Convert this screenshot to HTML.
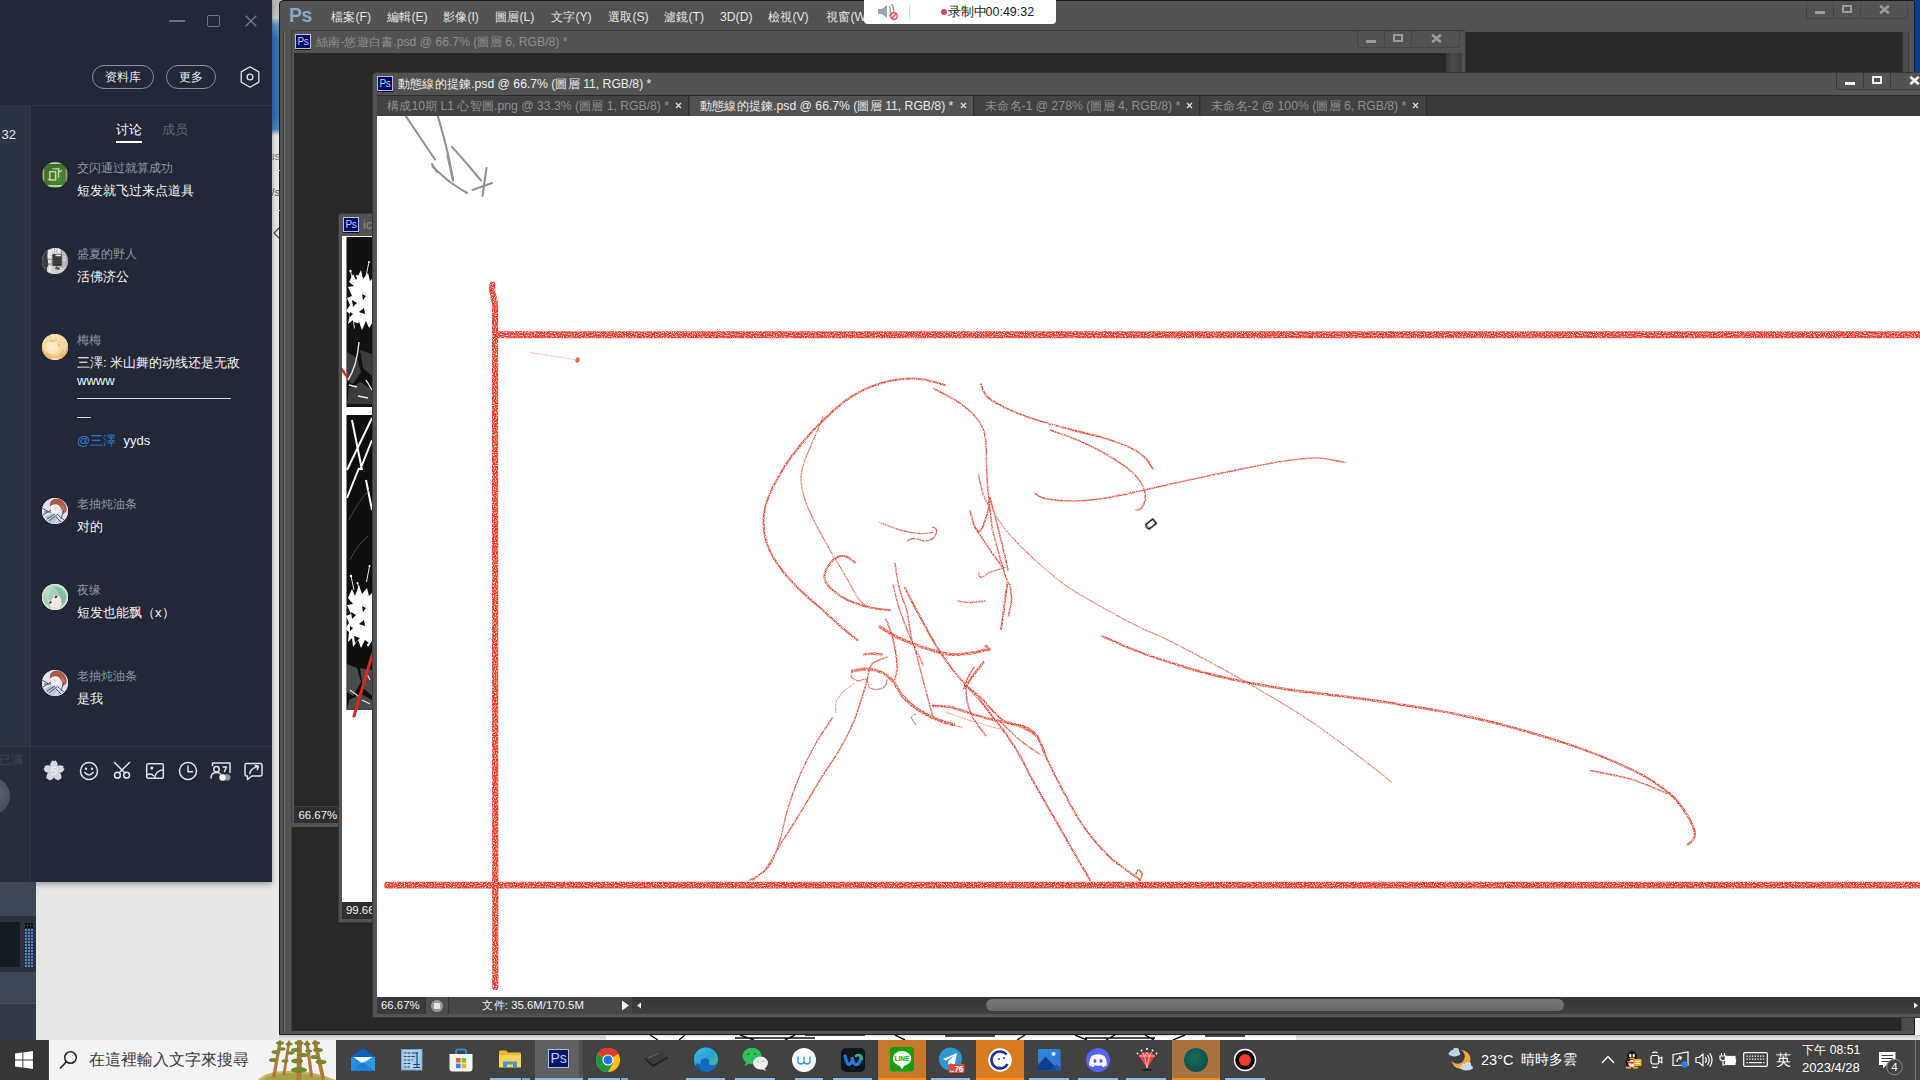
<!DOCTYPE html>
<html lang="zh">
<head>
<meta charset="utf-8">
<title>screen</title>
<style>
*{box-sizing:border-box;margin:0;padding:0}
html,body{width:1920px;height:1080px;overflow:hidden;background:#e6e6e6;font-family:"Liberation Sans",sans-serif;}
.abs{position:absolute}
#desk{position:absolute;left:0;top:0;width:1920px;height:1080px;overflow:hidden;background:#e6e6e6}
/* ---------- desktop remnants ---------- */
#gapstrip{left:272px;top:0;width:8px;height:1040px;background:linear-gradient(#b9b5b0 0,#c9c6c2 16px,#e9e9e9 20px,#e9e9e9 100%)}
#gapblue{left:272px;top:17px;width:8px;height:118px;background:linear-gradient(#d0d8e2 0,#5c8fc4 8px,#2f74b8 22px,#2f74b8 100px,#4a86c0 112px,#e0e4e8 118px)}
/* ---------- left chat panel ---------- */
#chat{left:0;top:0;width:272px;height:882px;background:#222838;color:#fff;box-shadow:0 2px 6px rgba(0,0,0,.35)}
#chat .col{left:0;top:105px;width:31px;height:777px;background:#2c3342;border-right:1px solid #323a4a}
#chat .hline{left:0;top:105px;width:272px;height:1px;background:#2d3444}
#chat .hline2{left:31px;top:746px;width:241px;height:1px;background:#2f3646}
.pill{position:absolute;height:24px;border:1px solid #8a90a0;border-radius:12px;color:#e8eaf0;font-size:12px;line-height:22px;text-align:center}
.name{position:absolute;left:77px;font-size:12px;color:#8e95a5;white-space:nowrap;line-height:14px}
.msg{position:absolute;left:77px;font-size:13px;color:#f2f3f6;white-space:nowrap;line-height:18px}
.av{position:absolute;left:42px;width:26px;height:26px;border-radius:50%;overflow:hidden}
/* ---------- below chat ---------- */
#lowleft{left:0;top:882px;width:36px;height:158px;background:#3f4756}
/* ---------- photoshop ---------- */
#ps{left:279px;top:0;width:1636px;height:1035px;background:#535353;border:1px solid #1c1c1c;border-radius:4px 0 0 0}
.pstxt{position:absolute;color:#e4e4e4;font-size:12.200px;white-space:nowrap}
.psico{position:absolute;width:16px;height:15px;box-shadow:0 1px 0 #111;background:#000a66;border:1px solid #b8bce6;color:#c6ccff;font-size:10px;line-height:13px;text-align:center;letter-spacing:-.3px}
.wbtn{position:absolute;height:17px;background:#535353;border:1px solid #444;border-top:none;border-radius:0 0 3px 3px}
/* ---------- taskbar ---------- */
#tb{left:0;top:1040px;width:1920px;height:40px;background:#424242}
#search{left:49px;top:1040px;width:287px;height:40px;background:#f3f3f3}
.tbi{position:absolute;top:1040px;width:48px;height:40px}
.tbi .ul{position:absolute;left:4px;right:4px;bottom:0;height:2px;background:#8fb8e0}
.tray{position:absolute;color:#fff;font-size:12px;white-space:nowrap}
.cj{display:inline-block;text-align:justify;text-align-last:justify;text-justify:inter-character;white-space:nowrap;vertical-align:baseline}
</style>
</head>
<body>
<div id="desk">

<!-- desktop gap -->
<div id="gapstrip" class="abs"></div>
<div id="gapblue" class="abs"></div>

<!-- PHOTOSHOP -->
<div id="ps" class="abs"></div>

<!-- right-of-PS desktop bits -->
<div class="abs" style="left:1915px;top:0;width:5px;height:72px;background:#0b3d97"></div>
<div class="abs" style="left:1915px;top:1017px;width:5px;height:23px;background:#f4f4f4"></div>
<!-- strip between PS bottom and taskbar -->
<div class="abs" style="left:279px;top:1035px;width:1641px;height:5px;background:linear-gradient(#c4c4c4,#dedede 60%,#e6e6e6)"></div>
<div class="abs" style="left:606px;top:1035px;width:690px;height:5px;background:linear-gradient(#d8d8d8,#fff 40%)"></div>
<svg class="abs" style="left:645px;top:1035px" width="615" height="5" viewBox="0 0 615 5"><path d="M5 0l8 5M40 0l-6 5M95 0l14 5M150 0l-10 5M160 0h60M250 0l10 5M300 1h50M380 0l-8 5M430 0l12 5M470 0l-9 5M500 0l9 5M540 0l-12 5M560 1h40M90 3h80M440 3h70" stroke="#111" stroke-width="1.4" fill="none"/></svg>

<!-- main PS dark workspace -->
<div class="abs" style="left:292px;top:32px;width:1610px;height:999px;background:#282828"></div>
<!-- frame lines -->
<div class="abs" style="left:283px;top:32px;width:1px;height:999px;background:#3a3a3a"></div><div class="abs" style="left:284px;top:32px;width:1px;height:999px;background:#727272"></div>
<div class="abs" style="left:291px;top:30px;width:1px;height:1001px;background:#404040"></div>
<div class="abs" style="left:1902px;top:32px;width:7px;height:40px;background:#4a4a4a;border-left:1px solid #3a3a3a;border-right:1px solid #3a3a3a"></div>
<div class="abs" style="left:1901px;top:1017px;width:13px;height:14px;background:#4c4c4c;border-left:1px solid #3a3a3a"></div>

<!-- PS menu bar -->
<div class="abs" style="left:289px;top:2px;font-size:19.500px;font-weight:bold;color:#86a6ca;letter-spacing:-.6px;line-height:26px">Ps</div>
<div class="pstxt" style="left:331px;top:10px;line-height:14px"><span class="cj" style="width:2em">檔案</span>(F)</div>
<div class="pstxt" style="left:387px;top:10px;line-height:14px"><span class="cj" style="width:2em">編輯</span>(E)</div>
<div class="pstxt" style="left:443px;top:10px;line-height:14px"><span class="cj" style="width:2em">影像</span>(I)</div>
<div class="pstxt" style="left:495px;top:10px;line-height:14px"><span class="cj" style="width:2em">圖層</span>(L)</div>
<div class="pstxt" style="left:551px;top:10px;line-height:14px"><span class="cj" style="width:2em">文字</span>(Y)</div>
<div class="pstxt" style="left:608px;top:10px;line-height:14px"><span class="cj" style="width:2em">選取</span>(S)</div>
<div class="pstxt" style="left:664px;top:10px;line-height:14px"><span class="cj" style="width:2em">濾鏡</span>(T)</div>
<div class="pstxt" style="left:720px;top:10px;line-height:14px">3D(D)</div>
<div class="pstxt" style="left:768px;top:10px;line-height:14px"><span class="cj" style="width:2em">檢視</span>(V)</div>
<div class="pstxt" style="left:826px;top:10px;line-height:14px"><span class="cj" style="width:2em">視窗</span>(W</div>
<!-- PS window buttons -->
<div class="wbtn" style="left:1806px;top:2px;width:102px"></div>
<div class="abs" style="left:1833px;top:2px;width:1px;height:17px;background:#444"></div>
<div class="abs" style="left:1860px;top:2px;width:1px;height:17px;background:#444"></div>
<div class="abs" style="left:1815px;top:11px;width:10px;height:3px;background:#9a9a9a"></div>
<div class="abs" style="left:1842px;top:5px;width:10px;height:8px;border:2px solid #9a9a9a"></div>
<svg class="abs" style="left:1879px;top:5px" width="11" height="9" viewBox="0 0 11 9"><path d="M1.200 0.800l8.600 7.400M9.800 0.800l-8.600 7.400" stroke="#9a9a9a" stroke-width="2.700"/></svg>

<!-- recording widget -->
<div class="abs" style="left:864px;top:0;width:192px;height:24px;background:#fff;border-radius:0 0 4px 4px"></div>
<svg class="abs" style="left:876px;top:3px" width="26" height="18" viewBox="0 0 26 18"><path d="M2 6h4l5-4v13l-5-4H2z" fill="#98a2ae"/><path d="M13 3c2 1.5 2 8.500 0 10M15.500 1c3 3 3 11 0 14" stroke="#9aa0a8" stroke-width="1.3" fill="none"/><circle cx="18" cy="13" r="3.200" fill="#fff" stroke="#e25555" stroke-width="1.400"/><path d="M15.800 15.200l4.400-4.400" stroke="#e25555" stroke-width="1.400"/></svg>
<div class="abs" style="left:909px;top:4px;width:1px;height:15px;background:#dcdcdc"></div>
<div class="abs" style="left:941px;top:9px;width:6px;height:6px;border-radius:3px;background:#e3456a"></div>
<div class="abs" style="left:948px;top:4px;font-size:12.5px;line-height:16px;color:#222;white-space:nowrap"><span class="cj" style="width:3em">录制中</span>00:49:32</div>

<!-- DOC WINDOW 1 -->
<div class="abs" style="left:291px;top:30px;width:1175px;height:797px;background:#535353;border:1px solid #3a3a3a;border-radius:4px 4px 0 0"></div>
<div class="abs" style="left:294px;top:53px;width:1152px;height:753px;background:#282828"></div>
<div class="abs" style="left:1446px;top:53px;width:16px;height:753px;background:linear-gradient(90deg,#3a3a3a,#4a4a4a 40%,#3e3e3e)"></div>
<div class="psico" style="left:295px;top:34px">Ps</div>
<div class="pstxt" style="left:316px;top:35px;line-height:14px;color:#8d8d8d"><span class="cj" style="width:2em">絲南</span>-<span class="cj" style="width:4em">悠遊白書</span>.psd @ 66.7% (<span class="cj" style="width:2em">圖層</span> 6, RGB/8) *</div>
<div class="wbtn" style="left:1357px;top:31px;width:103px;border-color:#464646"></div>
<div class="abs" style="left:1384px;top:31px;width:1px;height:17px;background:#464646"></div>
<div class="abs" style="left:1411px;top:31px;width:1px;height:17px;background:#464646"></div>
<div class="abs" style="left:1366px;top:40px;width:10px;height:3px;background:#9a9a9a"></div>
<div class="abs" style="left:1393px;top:34px;width:10px;height:8px;border:2px solid #9a9a9a"></div>
<svg class="abs" style="left:1431px;top:34px" width="11" height="9" viewBox="0 0 11 9"><path d="M1.200 0.800l8.600 7.400M9.800 0.800l-8.600 7.400" stroke="#9a9a9a" stroke-width="2.700"/></svg>
<!-- doc1 status -->
<div class="abs" style="left:294px;top:806px;width:1168px;height:18px;background:#3e3e3e"></div><div class="abs" style="left:291px;top:823px;width:50px;height:4px;background:#535353"></div>
<div class="abs" style="left:294px;top:807px;width:44px;height:16px;background:#2f2f2f;color:#f0f0f0;font-size:11.400px;line-height:16px;padding-left:4.500px">66.67%</div>

<!-- DOC WINDOW 3 (mini) -->
<div class="abs" style="left:338px;top:213px;width:60px;height:710px;background:#535353;border:1px solid #3a3a3a;border-radius:4px 0 0 0"></div>
<div class="psico" style="left:343px;top:217px">Ps</div>
<div class="pstxt" style="left:363px;top:218px;line-height:14px;color:#8d8d8d">ic</div>
<div class="abs" style="left:342px;top:236px;width:40px;height:666px;background:#fff"></div>
<svg class="abs" style="left:342px;top:236px" width="31" height="485" viewBox="342 236 31 485">
<rect x="346.500" y="237" width="26" height="170" fill="#111"/>
<rect x="346.500" y="415" width="26" height="295" fill="#0e0e0e"/>
<!-- panel 1 flower -->
<g fill="#fff">
<path d="M349 282l4-8 3 6 5-10 2 9 5-6 2 8 3-3v44l-4 6-3-7-4 9-3-8-5 7-1-9-5 4 2-10-4-3 4-6-3-7 5-2-4-9 6-1z"/>
<circle cx="350.500" cy="271" r="1.200"/><circle cx="369" cy="262" r="1"/><circle cx="357" cy="276" r="1"/>
</g>
<g stroke="#fff" stroke-width=".9" fill="none"><path d="M350.500 271l3 12M369 262l-3 14M357 276l2 8"/></g>
<g fill="#111"><path d="M352 300l5 3-4 4zM359 312l5-4 1 6zM354 322l6 2-5 5zM362 294l4 2-3 4zM365 325l4 3-5 3zM350 312l3 2-3 3z"/></g>
<g fill="#3c3c3c"><path d="M347 352l10 6 4 14-8 12-6-4zM360 350l12 4v22l-9-8zM349 388l12-6 11 8v14h-25z"/></g>
<g stroke="#e8e8e8" stroke-width="1.400" fill="none"><path d="M359 342q-2 24-11 38M366 380l6 10M349 385l8 2M358 396l10 2"/></g>
<path d="M341 366l6.500 9.500v4l-6.500-9z" fill="#d8281c"/>
<!-- panel 2 -->
<g stroke="#fff" stroke-width="2" fill="none"><path d="M347 470l25-52M352 420l10 50M372 440l-12 30M347 498l12-30M366 480l6 30"/></g>
<g stroke="#555" stroke-width=".8" fill="none"><path d="M349 520q10-20 20-30M350 560q8-16 18-24"/></g>
<g fill="#fff">
<path d="M348 598l4-9 3 7 4-11 3 9 5-6 2 8 3-3v48l-4 6-3-7-4 8-3-8-5 7-1-9-4 4 1-10-4-3 4-6-3-7 5-2-4-9 6-1z"/>
<circle cx="351" cy="576" r="1.200"/><circle cx="369.500" cy="566" r="1"/><circle cx="357.500" cy="583" r="1"/>
</g>
<g stroke="#fff" stroke-width=".9" fill="none"><path d="M351 576l3 14M369.500 566l-3 16M357.500 583l2 8"/></g>
<g fill="#0e0e0e"><path d="M351 612l5 3-4 4zM359 624l5-4 1 6zM354 636l6 2-5 5zM362 606l4 2-3 4zM365 640l4 3-5 3zM350 626l3 2-3 3z"/></g>
<g fill="#4a4a4a"><path d="M347 664l10 4 4 14-8 14-6-4zM360 668l12 2v26l-9-8zM349 700l12-6 11 6v10h-25z"/></g>
<g stroke="#e0e0e0" stroke-width="1.200" fill="none"><path d="M350 690l8 6M362 700l8 4M366 672l4 8"/></g>
<path d="M372.500 654L354 716" stroke="#d8281c" stroke-width="3" stroke-linecap="round"/>
</svg>
<div class="abs" style="left:342px;top:902px;width:40px;height:17px;background:#2f2f2f;color:#f0f0f0;font-size:11.400px;line-height:16px;padding-left:4px;white-space:nowrap;overflow:hidden">99.66</div>

<!-- DOC WINDOW 2 (active) -->
<div class="abs" style="left:372px;top:72px;width:1560px;height:946px;background:#535353;border:1px solid #383838;border-radius:4px 0 0 0"></div>
<div class="psico" style="left:377px;top:76px">Ps</div>
<div class="pstxt" style="left:398px;top:77px;line-height:14px;color:#ececec"><span class="cj" style="width:6em">動態線的提鍊</span>.psd @ 66.7% (<span class="cj" style="width:2em">圖層</span> 11, RGB/8) *</div>
<div class="wbtn" style="left:1836px;top:73px;width:100px;border-color:#3c3c3c"></div>
<div class="abs" style="left:1863px;top:73px;width:1px;height:17px;background:#3c3c3c"></div>
<div class="abs" style="left:1890px;top:73px;width:1px;height:17px;background:#3c3c3c"></div>
<div class="abs" style="left:1845px;top:82px;width:10px;height:3px;background:#f0f0f0"></div>
<div class="abs" style="left:1872px;top:76px;width:10px;height:8px;border:2px solid #f0f0f0"></div>
<svg class="abs" style="left:1909px;top:76px" width="11" height="9" viewBox="0 0 11 9"><path d="M1.200 0.800l8.600 7.400M9.800 0.800l-8.600 7.400" stroke="#f0f0f0" stroke-width="2.700"/></svg>
<!-- tab bar -->
<div class="abs" style="left:377px;top:95px;width:1543px;height:21px;background:#3a3a3a;border-top:1px solid #2c2c2c"></div>
<div class="abs" style="left:377px;top:96px;width:312px;height:20px;background:#424242;border-right:1px solid #2e2e2e"></div>
<div class="abs" style="left:690px;top:96px;width:284px;height:20px;background:#535353;border-right:1px solid #2e2e2e"></div>
<div class="abs" style="left:975px;top:96px;width:225px;height:20px;background:#424242;border-right:1px solid #2e2e2e"></div>
<div class="abs" style="left:1201px;top:96px;width:226px;height:20px;background:#424242;border-right:1px solid #2e2e2e"></div>
<div class="pstxt" style="left:387px;top:99px;line-height:14px;color:#8f8f8f"><span class="cj" style="width:2em">構成</span>10<span class="cj" style="width:1em">期</span> L1 <span class="cj" style="width:3em">心智圖</span>.png @ 33.3% (<span class="cj" style="width:2em">圖層</span> 1, RGB/8) *</div>
<div class="pstxt" style="left:700px;top:99px;line-height:14px;color:#e6e6e6"><span class="cj" style="width:6em">動態線的提鍊</span>.psd @ 66.7% (<span class="cj" style="width:2em">圖層</span> 11, RGB/8) *</div>
<div class="pstxt" style="left:985px;top:99px;line-height:14px;color:#8f8f8f"><span class="cj" style="width:3em">未命名</span>-1 @ 278% (<span class="cj" style="width:2em">圖層</span> 4, RGB/8) *</div>
<div class="pstxt" style="left:1211px;top:99px;line-height:14px;color:#8f8f8f"><span class="cj" style="width:3em">未命名</span>-2 @ 100% (<span class="cj" style="width:2em">圖層</span> 6, RGB/8) *</div>
<svg class="abs" style="left:675px;top:102px" width="7" height="7" viewBox="0 0 7 7"><path d="M1 1l5 5M6 1l-5 5" stroke="#dcdcdc" stroke-width="1.250"/></svg>
<svg class="abs" style="left:960px;top:102px" width="7" height="7" viewBox="0 0 7 7"><path d="M1 1l5 5M6 1l-5 5" stroke="#dcdcdc" stroke-width="1.250"/></svg>
<svg class="abs" style="left:1186px;top:102px" width="7" height="7" viewBox="0 0 7 7"><path d="M1 1l5 5M6 1l-5 5" stroke="#dcdcdc" stroke-width="1.250"/></svg>
<svg class="abs" style="left:1412px;top:102px" width="7" height="7" viewBox="0 0 7 7"><path d="M1 1l5 5M6 1l-5 5" stroke="#dcdcdc" stroke-width="1.250"/></svg>
<!-- canvas -->
<div class="abs" style="left:377px;top:116px;width:1543px;height:881px;background:#fff"></div>
<!--DRAW-START--><svg class="abs" style="left:377px;top:116px" width="1543" height="881" viewBox="377 116 1543 881">
<defs><filter id="rough" x="-2%" y="-20%" width="104%" height="140%"><feTurbulence type="fractalNoise" baseFrequency="0.9" numOctaves="1" seed="3" result="n"/><feColorMatrix in="n" type="matrix" values="0 0 0 0 0  0 0 0 0 0  0 0 0 0 0  0 0 0 -3 2.35" result="m"/><feComposite in="SourceGraphic" in2="m" operator="in" result="c"/><feGaussianBlur in="c" stdDeviation="0.55"/></filter><filter id="rough2" x="-1%" y="-1%" width="102%" height="102%"><feTurbulence type="fractalNoise" baseFrequency="1.1" numOctaves="1" seed="7" result="n"/><feColorMatrix in="n" type="matrix" values="0 0 0 0 0  0 0 0 0 0  0 0 0 0 0  0 0 0 -2.6 2.05" result="m"/><feComposite in="SourceGraphic" in2="m" operator="in"/></filter></defs>
<g fill="none" stroke="#707070" stroke-width="2.1" stroke-linecap="round" opacity=".75">
<path d="M406.0 116.5L435.0 159.5"/>
<path d="M438.0 116.5C439.5 122.1 444.5 139.6 447.0 150.0C449.5 160.4 452.0 174.2 453.0 179.0"/>
<path d="M432.5 166.5C435.4 169.1 444.2 177.6 450.0 182.0C455.8 186.4 464.2 191.2 467.0 193.0"/>
<path d="M452.0 147.0C454.7 150.0 463.2 159.4 468.0 165.0C472.8 170.6 478.8 177.9 481.0 180.5"/>
<path d="M486.5 168.0L482.5 196.0"/>
<path d="M472.5 190.0L492.0 183.0"/>
<path d="M447.5 155.5L453.0 180.5"/>
<path d="M432.0 164.0L437.0 172.0"/>
</g>
<g filter="url(#rough)" fill="none" stroke="#e8382c" stroke-linecap="round">
<path d="M497 334.700H1925" stroke-width="7"/>
<path d="M387.500 885.200H1925" stroke-width="6.800"/>
<path d="M492.500 284.500C490.500 290 494 296 495 304L495.300 987" stroke-width="6.200"/>
</g>
<ellipse cx="577.500" cy="360" rx="2" ry="2.800" fill="#e8382c" opacity=".75" transform="rotate(20 577.500 360)"/>
<g filter="url(#rough2)" fill="none" stroke="#e03a2a" stroke-linecap="round" stroke-linejoin="round">
<path d="M945.0 385.0C940.0 383.9 925.8 378.8 915.0 378.5C904.2 378.2 890.8 380.3 880.0 383.5C869.2 386.7 859.2 391.7 850.0 397.5C840.8 403.3 832.9 411.0 825.0 418.5C817.1 426.0 809.6 433.9 802.5 442.5C795.4 451.1 788.3 460.4 782.5 470.0C776.7 479.6 770.7 491.2 767.5 500.0C764.3 508.8 763.5 515.0 763.5 522.5C763.5 530.0 764.8 537.5 767.5 545.0C770.2 552.5 774.6 560.0 780.0 567.5C785.4 575.0 792.9 582.9 800.0 590.0C807.1 597.1 815.4 603.7 822.5 610.0C829.6 616.3 836.7 623.0 842.5 628.0C848.3 633.0 855.0 638.0 857.5 640.0" stroke-width="2.08" opacity="0.92"/>
<path d="M823.0 417.0C821.2 421.2 815.5 434.8 812.5 442.0C809.5 449.2 806.9 454.1 805.0 460.0C803.1 465.9 801.0 470.8 801.0 477.5C801.0 484.2 802.7 492.5 805.0 500.0C807.3 507.5 810.8 514.2 815.0 522.5C819.2 530.8 825.0 541.2 830.0 550.0C835.0 558.8 840.4 567.1 845.0 575.0C849.6 582.9 854.0 592.3 857.5 597.5C861.0 602.7 864.6 604.6 866.0 606.0" stroke-width="1.30" opacity="0.76"/>
<path d="M933.5 388.5C937.1 390.4 948.5 395.8 955.0 400.0C961.5 404.2 967.9 408.9 972.5 413.5C977.1 418.1 980.2 422.7 982.5 427.5C984.8 432.3 985.3 436.2 986.0 442.5C986.7 448.8 986.2 457.9 986.5 465.0C986.8 472.1 987.1 479.2 987.5 485.0C987.9 490.8 988.6 495.5 989.0 500.0C989.4 504.5 989.8 510.0 990.0 512.0" stroke-width="1.56" opacity="0.86"/>
<path d="M981.0 384.0C982.1 386.2 982.7 392.7 987.5 397.0C992.3 401.3 1001.2 406.0 1010.0 410.0C1018.8 414.0 1029.6 417.7 1040.0 421.0C1050.4 424.3 1062.1 427.2 1072.5 430.0C1082.9 432.8 1092.9 434.6 1102.5 437.5C1112.1 440.4 1122.9 444.2 1130.0 447.5C1137.1 450.8 1141.2 454.0 1145.0 457.5C1148.8 461.0 1151.2 466.7 1152.5 468.5" stroke-width="1.82" opacity="0.92"/>
<path d="M1050.0 430.0C1054.6 431.7 1067.9 435.8 1077.5 440.0C1087.1 444.2 1098.3 449.6 1107.5 455.0C1116.7 460.4 1126.5 467.1 1132.5 472.5C1138.5 477.9 1141.4 482.9 1143.5 487.5C1145.6 492.1 1145.4 496.5 1145.0 500.0C1144.6 503.5 1142.5 506.8 1141.0 508.5C1139.5 510.2 1136.8 509.8 1136.0 510.0" stroke-width="1.56" opacity="0.86"/>
<path d="M1035.0 493.5C1036.7 494.3 1038.8 497.2 1045.0 498.5C1051.2 499.8 1062.9 501.0 1072.5 501.0C1082.1 501.0 1091.2 500.2 1102.5 498.5C1113.8 496.8 1127.5 493.7 1140.0 491.0C1152.5 488.3 1164.2 485.4 1177.5 482.5C1190.8 479.6 1203.2 476.9 1220.0 473.5C1236.8 470.1 1261.8 464.6 1278.0 462.0C1294.2 459.4 1305.8 457.9 1317.0 458.0C1328.2 458.1 1340.3 461.8 1345.0 462.5" stroke-width="1.69" opacity="0.86"/>
<path d="M880.0 522.5C883.3 523.8 893.3 528.2 900.0 530.0C906.7 531.8 914.6 533.1 920.0 533.5C925.4 533.9 930.4 532.7 932.5 532.5" stroke-width="1.30" opacity="0.81"/>
<path d="M932.5 527.0C933.2 527.5 936.2 528.2 936.5 530.0C936.8 531.8 935.9 535.7 934.0 537.5C932.1 539.3 928.2 540.8 925.0 541.0C921.8 541.2 917.9 538.6 915.0 538.5C912.1 538.4 908.8 540.2 907.5 540.5" stroke-width="1.43" opacity="0.86"/>
<path d="M978.5 475.0C979.3 478.3 981.6 489.2 983.5 495.0C985.4 500.8 988.5 504.2 990.0 510.0C991.5 515.8 990.8 522.1 992.5 530.0C994.2 537.9 997.8 549.6 1000.0 557.5C1002.2 565.4 1004.3 572.9 1006.0 577.5C1007.7 582.1 1009.3 583.8 1010.0 585.0" stroke-width="1.43" opacity="0.86"/>
<path d="M970.0 511.0C970.8 513.8 973.2 524.3 975.0 527.5C976.8 530.7 978.9 532.5 981.0 530.0C983.1 527.5 986.0 517.9 987.5 512.5C989.0 507.1 989.6 500.0 990.0 497.5" stroke-width="1.69" opacity="0.92"/>
<path d="M975.0 527.5C977.5 531.2 985.4 543.4 990.0 550.0C994.6 556.6 1000.4 564.2 1002.5 567.0" stroke-width="1.56" opacity="0.86"/>
<path d="M1005.0 567.5C1002.5 568.3 994.0 570.8 990.0 572.5C986.0 574.2 982.9 577.5 981.0 577.5C979.1 577.5 978.9 573.3 978.5 572.5" stroke-width="1.43" opacity="0.81"/>
<path d="M1007.5 582.5C1007.1 585.4 1005.8 593.8 1005.0 600.0C1004.2 606.2 1003.2 615.2 1002.5 620.0C1001.8 624.8 1001.2 627.5 1001.0 629.0" stroke-width="1.95" opacity="0.92"/>
<path d="M1010.0 585.0C1010.2 587.5 1011.8 594.8 1011.5 600.0C1011.2 605.2 1009.0 613.3 1008.5 616.0" stroke-width="1.56" opacity="0.86"/>
<path d="M990.0 498.0C991.0 501.7 993.8 511.7 996.0 520.0C998.2 528.3 1001.0 539.7 1003.0 548.0C1005.0 556.3 1007.2 566.3 1008.0 570.0" stroke-width="1.69" opacity="0.86"/>
<path d="M957.5 601.0C959.6 601.2 965.4 602.5 970.0 602.5C974.6 602.5 982.5 601.2 985.0 601.0" stroke-width="1.56" opacity="0.81"/>
<path d="M855.0 562.5C853.3 561.4 848.3 556.7 845.0 556.0C841.7 555.3 838.2 556.2 835.0 558.5C831.8 560.8 827.7 566.4 826.0 570.0C824.3 573.6 823.9 576.7 825.0 580.0C826.1 583.3 828.8 586.7 832.5 590.0C836.2 593.3 841.2 597.1 847.5 600.0C853.8 602.9 862.9 605.8 870.0 607.5C877.1 609.2 886.7 609.6 890.0 610.0" stroke-width="2.08" opacity="0.92"/>
<path d="M895.0 563.5C895.6 567.1 897.2 578.9 898.5 585.0C899.8 591.1 901.6 595.8 903.0 600.0C904.4 604.2 905.2 603.0 906.7 610.0C908.2 617.0 910.8 635.5 912.2 642.0C913.6 648.5 912.9 641.6 915.0 649.0C917.1 656.4 921.7 675.1 924.7 686.4C927.7 697.7 931.6 711.9 933.0 717.0" stroke-width="1.43" opacity="0.86"/>
<path d="M893.0 585.0C894.1 589.2 896.5 600.5 899.7 610.0C902.9 619.5 909.0 634.3 912.2 642.0C915.4 649.7 917.1 652.0 919.0 656.0C920.9 660.0 922.8 664.3 923.5 666.0" stroke-width="1.43" opacity="0.81"/>
<path d="M905.0 588.0C906.9 591.7 911.0 600.1 916.4 610.0C921.8 619.9 931.0 637.3 937.2 647.5C943.5 657.7 949.0 664.6 953.9 671.0C958.8 677.4 962.2 681.1 966.4 685.7C970.6 690.4 974.5 693.7 978.9 698.9C983.3 704.1 988.2 711.0 992.8 717.0C997.4 723.0 1002.1 728.3 1006.7 735.0C1011.3 741.7 1016.3 749.5 1020.6 757.0C1024.9 764.5 1027.2 770.3 1032.5 780.0C1037.8 789.7 1045.8 803.3 1052.5 815.0C1059.2 826.7 1066.2 839.2 1072.5 850.0C1078.8 860.8 1087.1 875.0 1090.0 880.0" stroke-width="1.95" opacity="0.92"/>
<path d="M995.0 515.0C997.5 518.3 1003.3 527.5 1010.0 535.0C1016.7 542.5 1025.8 551.7 1035.0 560.0C1044.2 568.3 1053.8 577.1 1065.0 585.0C1076.2 592.9 1090.0 600.4 1102.5 607.5C1115.0 614.6 1128.9 622.0 1140.0 627.5C1151.1 633.0 1152.5 632.1 1169.0 640.5C1185.5 648.9 1215.8 664.8 1239.0 678.0C1262.2 691.2 1288.0 706.4 1308.0 719.5C1328.0 732.6 1345.1 746.1 1359.0 756.5C1372.9 766.9 1386.1 777.8 1391.5 782.0" stroke-width="1.17" opacity="0.70"/>
<path d="M1102.0 636.0C1109.3 639.1 1127.1 647.9 1146.0 654.5C1164.9 661.1 1192.3 669.8 1215.5 675.5C1238.7 681.2 1257.9 684.8 1285.0 689.0C1312.1 693.2 1347.2 696.3 1378.0 701.0C1408.8 705.7 1439.2 710.1 1470.0 717.0C1500.8 723.9 1535.9 733.7 1563.0 742.5C1590.1 751.3 1614.8 761.5 1632.5 770.0C1650.2 778.5 1660.2 785.8 1669.5 793.5C1678.8 801.2 1683.8 809.6 1688.0 816.5C1692.2 823.4 1695.0 830.3 1695.0 835.0C1695.0 839.7 1689.2 842.9 1688.0 844.5" stroke-width="2.34" opacity="0.92"/>
<path d="M1590.5 770.5C1597.4 772.0 1619.2 775.7 1632.0 779.5C1644.8 783.3 1661.2 791.2 1667.0 793.5" stroke-width="1.56" opacity="0.86"/>
<path d="M879.6 626.7C882.3 628.3 890.2 633.6 895.6 636.4C901.0 639.2 906.4 641.1 912.2 643.3C918.0 645.5 923.8 647.8 930.3 649.6C936.8 651.5 944.0 653.8 951.0 654.4C958.0 655.0 966.4 653.7 972.0 653.0C977.6 652.3 981.5 650.9 984.4 650.3C987.3 649.7 989.0 650.3 989.3 649.6C989.6 648.9 986.5 646.6 986.0 646.0" stroke-width="2.99" opacity="0.86"/>
<path d="M885.8 619.0C886.7 621.4 889.8 628.1 891.4 633.6C893.0 639.1 894.7 645.9 895.6 651.7C896.5 657.5 897.1 663.7 897.0 668.3C896.9 672.9 895.2 677.5 894.9 679.4" stroke-width="1.69" opacity="0.86"/>
<path d="M965.0 685.0C967.5 687.0 973.8 691.2 980.0 697.0C986.2 702.8 995.4 714.9 1002.5 720.0C1009.6 725.1 1016.7 724.6 1022.5 727.5C1028.3 730.4 1033.3 732.1 1037.5 737.5C1041.7 742.9 1043.3 751.2 1047.5 760.0C1051.7 768.8 1056.7 779.2 1062.5 790.0C1068.3 800.8 1075.0 814.2 1082.5 825.0C1090.0 835.8 1099.6 847.1 1107.5 855.0C1115.4 862.9 1124.6 868.3 1130.0 872.5C1135.4 876.7 1138.3 878.8 1140.0 880.0" stroke-width="1.82" opacity="0.92"/>
<path d="M1135.0 877.0C1135.5 875.8 1136.8 870.5 1138.0 870.0C1139.2 869.5 1141.7 872.2 1142.0 874.0C1142.3 875.8 1140.3 879.8 1140.0 881.0" stroke-width="1.56" opacity="0.92"/>
<path d="M983.7 662.0C982.0 664.2 976.4 671.0 973.3 675.3C970.2 679.6 966.4 685.7 965.0 687.8" stroke-width="2.21" opacity="0.92"/>
<path d="M974.0 667.6C973.0 669.3 969.5 674.4 967.8 678.0C966.1 681.6 964.3 687.2 963.6 689.0" stroke-width="1.69" opacity="0.86"/>
<path d="M965.7 687.8C966.1 690.6 966.5 699.3 967.8 704.4C969.1 709.5 970.3 713.1 973.3 718.3C976.3 723.5 983.7 732.8 985.8 735.7" stroke-width="1.69" opacity="0.86"/>
<path d="M933.0 705.8C936.0 706.0 944.5 705.8 951.0 707.2C957.5 708.6 965.0 711.9 972.0 714.0C979.0 716.1 985.9 718.1 992.8 719.7C999.7 721.4 1007.8 722.5 1013.6 723.9C1019.4 725.3 1023.6 725.9 1027.5 728.0C1031.4 730.1 1034.2 731.8 1037.2 736.4C1040.2 741.0 1044.2 752.6 1045.6 755.8" stroke-width="2.47" opacity="0.86"/>
<path d="M999.7 721.0C1003.2 724.3 1013.9 735.0 1020.6 740.6C1027.3 746.2 1036.8 752.1 1040.0 754.4" stroke-width="1.43" opacity="0.81"/>
<path d="M945.0 712.0C950.0 713.7 965.8 719.2 975.0 722.0C984.2 724.8 995.8 727.8 1000.0 729.0" stroke-width="1.04" opacity="0.49"/>
<path d="M864.3 654.4C865.8 654.3 870.1 653.6 873.0 653.6C875.9 653.6 880.2 654.3 881.7 654.4" stroke-width="2.60" opacity="0.76"/>
<path d="M887.0 657.0C884.5 658.2 875.2 660.7 872.0 664.0C868.8 667.3 869.0 672.7 867.8 676.7C866.6 680.7 867.3 680.4 865.0 687.8C862.7 695.2 858.1 710.8 853.9 721.0C849.7 731.2 845.6 739.1 840.0 748.9C834.4 758.7 827.1 768.6 820.0 780.0C812.9 791.4 804.2 806.7 797.5 817.5C790.8 828.3 785.4 836.2 780.0 845.0C774.6 853.8 770.0 864.2 765.0 870.0C760.0 875.8 752.5 878.3 750.0 880.0" stroke-width="1.56" opacity="0.86"/>
<path d="M852.5 671.0C855.0 670.7 862.9 668.8 867.8 669.0C872.7 669.2 877.5 670.5 881.7 672.5C885.9 674.5 889.3 676.9 892.8 680.8C896.3 684.7 898.6 691.4 902.5 696.0C906.4 700.6 911.1 704.9 916.4 708.6C921.7 712.3 928.1 715.6 934.4 718.3C940.6 721.0 950.6 723.5 953.9 724.6" stroke-width="2.99" opacity="0.86"/>
<path d="M852.5 671.0C852.2 672.0 850.1 675.1 851.0 676.7C851.9 678.3 855.4 680.3 858.0 680.8C860.6 681.2 864.4 678.2 866.4 679.4C868.4 680.6 867.6 686.2 869.9 687.8C872.2 689.4 877.6 689.5 880.3 689.0C882.9 688.5 884.7 686.6 885.8 685.0C886.9 683.4 886.8 680.4 887.0 679.5" stroke-width="1.43" opacity="0.70"/>
<path d="M915.7 714.0C915.0 714.6 911.5 715.8 911.5 717.6C911.5 719.4 915.0 723.4 915.7 724.6" stroke-width="1.17" opacity="0.76"/>
<path d="M925.0 714.0C928.3 715.6 938.8 721.3 945.0 723.5C951.2 725.7 959.2 726.4 962.0 727.0" stroke-width="1.30" opacity="0.65"/>
<path d="M853.9 683.6C852.0 685.1 845.5 689.4 842.5 692.5C839.5 695.6 837.1 699.2 836.0 702.5C834.9 705.8 836.0 710.8 836.0 712.5" stroke-width="1.04" opacity="0.59"/>
<path d="M832.5 717.5C829.6 722.1 820.4 735.4 815.0 745.0C809.6 754.6 804.6 764.2 800.0 775.0C795.4 785.8 790.8 799.2 787.5 810.0C784.2 820.8 782.9 830.8 780.0 840.0C777.1 849.2 774.6 858.3 770.0 865.0C765.4 871.7 755.4 877.5 752.5 880.0" stroke-width="1.43" opacity="0.86"/>
<path d="M530.0 352.5C533.7 353.1 544.4 354.8 552.0 356.0C559.6 357.2 571.6 359.1 575.5 359.7" stroke-width="0.91" opacity="0.43"/>
</g>
<g transform="translate(1151 524) rotate(-38)"><rect x="-4.500" y="-2.800" width="9" height="5.600" fill="#fff" stroke="#000" stroke-width="1.400"/><path d="M-4.500 -2.800l-1.500 2.800 1.500 2.800" fill="#fff" stroke="#000" stroke-width="1"/></g>
</svg><!--DRAW-END-->
<!-- doc2 status bar -->
<div class="abs" style="left:377px;top:997px;width:1543px;height:17px;background:linear-gradient(#343434,#404040)"></div>
<div class="abs" style="left:377px;top:997px;width:255px;height:17px;background:#464646"></div><div class="abs" style="left:377px;top:997px;width:48px;height:17px;background:#3a3a3a"></div>
<div class="abs" style="left:425px;top:997px;width:24px;height:17px;background:#4e4e4e;border-left:1px solid #333;border-right:1px solid #333"></div>

<div class="pstxt" style="left:381px;top:998px;font-size:11.400px;line-height:15px;color:#f0f0f0">66.67%</div>
<div class="abs" style="left:431px;top:1000px;width:12px;height:12px;border-radius:6px;background:#9a9a9a"></div>
<div class="abs" style="left:434px;top:1003px;width:6px;height:6px;background:#e8e8e8;border-radius:1px"></div>
<div class="pstxt" style="left:482px;top:998px;font-size:11.400px;line-height:15px;color:#f0f0f0"><span class="cj" style="width:2em">文件</span>: 35.6M/170.5M</div>
<svg class="abs" style="left:621px;top:1000px" width="9" height="11" viewBox="0 0 9 11"><path d="M1 0.500v10l7-5z" fill="#f0f0f0"/></svg>
<svg class="abs" style="left:637px;top:1002px" width="5" height="7" viewBox="0 0 5 7"><path d="M4 0.500v6l-4-3z" fill="#f0f0f0"/></svg>
<svg class="abs" style="left:1913px;top:1002px" width="5" height="7" viewBox="0 0 5 7"><path d="M1 0.500v6l4-3z" fill="#f0f0f0"/></svg>
<div class="abs" style="left:986px;top:999px;width:578px;height:12px;border-radius:6px;background:linear-gradient(#7a7a7a,#686868)"></div>


<!-- CHAT PANEL -->
<div id="chat" class="abs">
<div class="col abs"></div>
<div class="hline abs"></div>
<div class="hline2 abs"></div>

<!-- window controls -->
<div class="abs" style="left:169px;top:20px;width:16px;height:1.500px;background:#6d7486"></div>
<div class="abs" style="left:207px;top:15px;width:13px;height:12px;border:1.500px solid #6d7486;border-radius:2px"></div>
<svg class="abs" style="left:245px;top:15px" width="12" height="12" viewBox="0 0 12 12"><path d="M.7.7l10.600 10.600M11.300.7L.7 11.300" stroke="#6d7486" stroke-width="1.500"/></svg>
<!-- pills -->
<div class="pill" style="left:92px;top:65px;width:62px"><span class="cj" style="width:3em">资料库</span></div>
<div class="pill" style="left:166px;top:65px;width:50px"><span class="cj" style="width:2em">更多</span></div>
<svg class="abs" style="left:238px;top:65px" width="24" height="24" viewBox="0 0 24 24"><path d="M12 1.800l8.800 5.100v10.200L12 22.200l-8.800-5.100V6.900z" fill="none" stroke="#dfe2ea" stroke-width="1.300" stroke-linejoin="round"/><circle cx="12" cy="12" r="2.900" fill="none" stroke="#dfe2ea" stroke-width="1.300"/></svg>
<!-- tabs -->
<div class="abs" style="left:116px;top:122px;font-size:13px;line-height:16px;color:#fff;white-space:nowrap"><span class="cj" style="width:2em">讨论</span></div>
<div class="abs" style="left:116px;top:141px;width:26px;height:2px;background:#fff"></div>
<div class="abs" style="left:162px;top:122px;font-size:13px;line-height:16px;color:#5f6779;white-space:nowrap"><span class="cj" style="width:2em">成员</span></div>
<div class="abs" style="left:1.500px;top:127px;font-size:13px;line-height:15px;color:#e4e6ee">32</div>

<!-- msg 1 -->
<div class="av" style="top:162px;background:radial-gradient(circle at 60% 60%,#4a8a3a,#3b742f 60%,#356a2b)"><svg width="26" height="26" viewBox="0 0 26 26"><rect x="6.500" y=".2" width="13" height="1.900" rx=".9" fill="#c6ca98"/><rect x="5.800" y="22.900" width="14.800" height="2.100" rx="1" fill="#c0cc9c"/><rect x=".7" y="6.400" width="1.600" height="12.500" rx=".8" fill="#aab07c"/><rect x="23.500" y="6.400" width="1.600" height="13.600" rx=".8" fill="#8c9a5c"/><g fill="none" stroke="#cdd29c" stroke-width="1.400" stroke-linejoin="round" stroke-linecap="round"><path d="M7.800 16.800V9.600h5.800v8.400H8.400L6.600 17.500"/><path d="M10.900 6.900h6.400M16.500 6.900v8M17.400 9.900l2.100-1.300"/></g><rect x="9.200" y="11" width="3" height="5.600" fill="#55783a" opacity=".8"/></svg></div>
<div class="name" style="top:161px"><span class="cj" style="width:8em">交闪通过就算成功</span></div>
<div class="msg" style="top:182px"><span class="cj" style="width:9em">短发就飞过来点道具</span></div>
<!-- msg 2 -->
<div class="av" style="top:248px;background:#c4c6ca"><svg width="26" height="26" viewBox="0 0 26 26"><rect width="26" height="26" fill="#a4a6aa"/><path d="M0 0h6l-1 8 1.500 8L4 26H0z" fill="#3c3f43"/><path d="M6 2l5-1-1 6-4 1z" fill="#e8e8ea"/><rect x="11" y="0" width="7.500" height="5.500" fill="#f0f0f2"/><path d="M12.500 0v5M15 0v5" stroke="#9a9ca0" stroke-width=".8"/><rect x="10.600" y="6.200" width="9" height="11.600" fill="#303234"/><rect x="13.500" y="6.600" width="5.500" height="1.600" fill="#e6e6e8"/><path d="M10.600 10h9M10.600 12.500h9M10.600 15h9" stroke="#50524f" stroke-width=".8"/><rect x="6" y="7.500" width="3.500" height="3" fill="#ececee"/><rect x="6" y="12" width="3" height="3.200" fill="#e0e0e2"/><path d="M20 3h4v18h-3z" fill="#b8babd"/><path d="M21 9h3M21 12h3" stroke="#e8e8ea" stroke-width="1.200"/><path d="M5 19q8-2 17 1v6H5z" fill="#cfd0d3"/><path d="M14 18l4 2-1 2-4-1z" fill="#55575a"/><path d="M6.500 17l3 1v5l-3 2z" fill="#e8e8ea"/></svg></div>
<div class="name" style="top:247px"><span class="cj" style="width:5em">盛夏的野人</span></div>
<div class="msg" style="top:268px"><span class="cj" style="width:4em">活佛济公</span></div>
<!-- msg 3 -->
<div class="av" style="top:334px;background:#f3d79c"><svg width="26" height="26" viewBox="0 0 26 26"><defs><radialGradient id="a3" cx=".44" cy=".5" r=".42"><stop offset="0" stop-color="#fdecd6"/><stop offset=".7" stop-color="#fde6c8"/><stop offset="1" stop-color="#f5d9a4" stop-opacity="0"/></radialGradient></defs><rect width="26" height="26" fill="#f4dba2"/><path d="M0 14q6 10 14 12H0z" fill="#eab066"/><path d="M26 8q-2 12-10 17l10 1z" fill="#e8b462"/><path d="M4 17q6 6 12 4l6-6q0 8-9 10-8-1-9-8z" fill="#efb878" opacity=".8"/><circle cx="11.500" cy="13" r="9.500" fill="url(#a3)"/><path d="M8 7.500q2.500-1.600 5 0" stroke="#c4a878" stroke-width=".9" fill="none"/><path d="M16.500 9.500q.8 1.500 0 3" stroke="#c8ac80" stroke-width=".9" fill="none"/><path d="M11 0q1 3 0 5M14 0q2 3 3 6" stroke="#faeecb" stroke-width="1.200" fill="none"/><ellipse cx="13" cy="25.500" rx="3" ry="1.500" fill="#dfe6ee"/></svg></div>
<div class="name" style="top:333px"><span class="cj" style="width:2em">梅梅</span></div>
<div class="msg" style="top:354px"><span class="cj" style="width:2em">三澤</span>: <span class="cj" style="width:10em">米山舞的动线还是无敌</span></div>
<div class="msg" style="top:372px">wwww</div>
<div class="abs" style="left:77px;top:398px;width:154px;height:1px;background:#d5d8e0"></div>
<div class="abs" style="left:77px;top:417px;width:14px;height:1px;background:#d5d8e0"></div>
<div class="msg" style="top:432px"><span style="color:#2b82d9">@<span class="cj" style="width:2em">三澤</span></span>&nbsp; yyds</div>
<!-- msg 4 -->
<div class="av" style="top:498px;background:#e2e2ee"><svg width="26" height="26" viewBox="0 0 26 26"><rect width="26" height="26" fill="#e2e2ee"/><path d="M8 9q-1-6 4-8 6-2 10 3 4 5 2 10l-4 2q1-6-4-9-4-1-8 2z" fill="#a85c44"/><path d="M19 6q5 3 4 9l-3 1q1-5-1-10z" fill="#c8706a"/><path d="M8.500 8q4-3 8-1 2 3 0 7l-5 2q-4-3-3-8z" fill="#f6f0ee"/><path d="M11.500 9.500l3 .5-1 3z" fill="#d8d0d8"/><path d="M15 8l2 3-2 1z" fill="#f4e8c8"/><path d="M3 19l7-4 6 4-4 7H6z" fill="#b4c4d8"/><path d="M13 26l4-6 5 5z" fill="#bccadc"/><g stroke="#454c64" stroke-width=".9" fill="none"><path d="M0 10l7 4M1 17l8-5M2 14l7 0M7 23l9-7M5 21l8-5M14 19l5 5M16 17l6 5M22 12l-3 9"/></g></svg></div>
<div class="name" style="top:497px"><span class="cj" style="width:5em">老抽炖油条</span></div>
<div class="msg" style="top:518px"><span class="cj" style="width:2em">对的</span></div>
<!-- msg 5 -->
<div class="av" style="top:584px;background:#a9d2b4"><svg width="26" height="26" viewBox="0 0 26 26"><defs><radialGradient id="a5" cx=".5" cy=".5" r=".5"><stop offset=".75" stop-color="#a9d2b4" stop-opacity="0"/><stop offset="1" stop-color="#e8f4ec"/></radialGradient></defs><rect width="26" height="26" fill="#a6d0b0"/><path d="M12 3q8-1 12 8 1 6-3 11l-2-8q-3-7-7-11z" fill="#86bca4"/><path d="M3 8q3-6 9-5-6 5-6 14z" fill="#b8dcc0"/><path d="M9 17q2-5 8-5 3 3 2 9-3 5-8 5-5-3-2-9z" fill="#f8e6e6"/><path d="M12 21q3 4 7 0l-2 5h-4z" fill="#fdf2f2"/><ellipse cx="14" cy="13" rx="1.300" ry="1" fill="#2c3a2c" transform="rotate(-30 14 13)"/><ellipse cx="8.400" cy="18.400" rx="1.300" ry=".9" fill="#2c3a2c" transform="rotate(-30 8.400 18.400)"/><path d="M11 11l2 1M6 17l2 .5" stroke="#d8eede" stroke-width="1"/><rect width="26" height="26" fill="url(#a5)"/></svg></div>
<div class="name" style="top:583px"><span class="cj" style="width:2em">夜缘</span></div>
<div class="msg" style="top:604px"><span class="cj" style="width:6em">短发也能飘（</span>x<span class="cj" style="width:1em">）</span></div>
<!-- msg 6 -->
<div class="av" style="top:670px;background:#e2e2ee"><svg width="26" height="26" viewBox="0 0 26 26"><rect width="26" height="26" fill="#e2e2ee"/><path d="M8 9q-1-6 4-8 6-2 10 3 4 5 2 10l-4 2q1-6-4-9-4-1-8 2z" fill="#a85c44"/><path d="M19 6q5 3 4 9l-3 1q1-5-1-10z" fill="#c8706a"/><path d="M8.500 8q4-3 8-1 2 3 0 7l-5 2q-4-3-3-8z" fill="#f6f0ee"/><path d="M11.500 9.500l3 .5-1 3z" fill="#d8d0d8"/><path d="M15 8l2 3-2 1z" fill="#f4e8c8"/><path d="M3 19l7-4 6 4-4 7H6z" fill="#b4c4d8"/><path d="M13 26l4-6 5 5z" fill="#bccadc"/><g stroke="#454c64" stroke-width=".9" fill="none"><path d="M0 10l7 4M1 17l8-5M2 14l7 0M7 23l9-7M5 21l8-5M14 19l5 5M16 17l6 5M22 12l-3 9"/></g></svg></div>
<div class="name" style="top:669px"><span class="cj" style="width:5em">老抽炖油条</span></div>
<div class="msg" style="top:690px"><span class="cj" style="width:2em">是我</span></div>

<!-- left col bits -->
<div class="abs" style="left:0;top:746px;width:31px;height:136px;background:#272d3b;border-right:1px solid #2f3646;border-top:1px solid #2f3646"></div>
<div class="abs" style="left:0;top:753px;font-size:12px;line-height:14px;color:#3f4758;white-space:nowrap;width:23px;overflow:hidden;direction:rtl">已满</div>
<div class="abs" style="left:-28px;top:777px;width:38px;height:38px;border-radius:19px;background:radial-gradient(circle at 70% 40%,#5a6272,#3c4454 70%,#2f3646)"></div>

<!-- toolbar icons -->
<svg class="abs" style="left:42px;top:759px" width="24" height="24" viewBox="0 0 24 24"><g fill="#d3d7e4"><g id="ptl"><path d="M12 12C7.500 9 7.800 3.500 10.800 1.300L12 2.600 13.200 1.300C16.200 3.500 16.500 9 12 12z"/></g><use href="#ptl" transform="rotate(72 12 12)"/><use href="#ptl" transform="rotate(144 12 12)"/><use href="#ptl" transform="rotate(216 12 12)"/><use href="#ptl" transform="rotate(288 12 12)"/><circle cx="12" cy="12" r="4.500"/><circle cx="12" cy="5.800" r="3.600"/><circle cx="17.900" cy="10.100" r="3.600"/><circle cx="15.600" cy="17" r="3.600"/><circle cx="8.400" cy="17" r="3.600"/><circle cx="6.100" cy="10.100" r="3.600"/></g><text x="12" y="16" font-family="Liberation Sans, sans-serif" font-size="10.500" fill="#f4f5fa" text-anchor="middle">5</text></svg>
<svg class="abs" style="left:79px;top:761px" width="20" height="20" viewBox="0 0 20 20"><circle cx="10" cy="10" r="8.500" fill="none" stroke="#dfe2ea" stroke-width="1.500"/><circle cx="7" cy="7.800" r="1.200" fill="#dfe2ea"/><circle cx="13" cy="7.800" r="1.200" fill="#dfe2ea"/><path d="M5.800 11.500q4.200 4.800 8.400 0" fill="none" stroke="#dfe2ea" stroke-width="1.500" stroke-linecap="round"/></svg>
<svg class="abs" style="left:112px;top:761px" width="20" height="20" viewBox="0 0 20 20"><g fill="none" stroke="#dfe2ea" stroke-width="1.500" stroke-linecap="round"><path d="M2.500 1.500l10.500 10.500M17.500 1.500l-10.500 10.500"/><circle cx="5.400" cy="14.200" r="2.900"/><circle cx="14.600" cy="14.200" r="2.900"/></g></svg>
<svg class="abs" style="left:145px;top:761px" width="20" height="20" viewBox="0 0 20 20"><g fill="none" stroke="#dfe2ea" stroke-width="1.500" stroke-linejoin="round"><rect x="1.700" y="2.700" width="16.600" height="14.600" rx="1.500"/><path d="M2 14q3.500-2.500 7 1M9.500 16.800q1.500-7 8.500-8"/></g><circle cx="6.800" cy="7" r="1.500" fill="#dfe2ea"/></svg>
<svg class="abs" style="left:178px;top:761px" width="20" height="20" viewBox="0 0 20 20"><g fill="none" stroke="#dfe2ea" stroke-width="1.500" stroke-linecap="round" stroke-linejoin="round"><circle cx="10" cy="10" r="8.500"/><path d="M10 5V10.800h4.500"/></g></svg>
<svg class="abs" style="left:209px;top:760px" width="23" height="22" viewBox="0 0 23 22"><g fill="none" stroke="#dfe2ea" stroke-width="1.500" stroke-linecap="round" stroke-linejoin="round"><path d="M3.500 5.500V3h17.500v9.500"/><circle cx="7.500" cy="9.200" r="2.700"/><path d="M2 18q0-5.500 5.500-5.500 2.500 0 4 1.500"/><path d="M14 7h3.500l-2 4.500"/></g><rect x="10.300" y="14.300" width="11.200" height="6.200" rx="3.100" fill="#9097a8"/><circle cx="13.500" cy="17.400" r="3.100" fill="#fff"/></svg>
<svg class="abs" style="left:243px;top:760px" width="21" height="22" viewBox="0 0 21 22"><g fill="none" stroke="#dfe2ea" stroke-width="1.500" stroke-linecap="round" stroke-linejoin="round"><path d="M3.500 3.500h14q1.500 0 1.500 1.500v9.500q0 1.500-1.500 1.500H9L4.500 19.500V16H3.500Q2 16 2 14.500V5Q2 3.500 3.500 3.500z"/><path d="M6.800 13.500q1-5.500 8-7M12 5.500l3.500.8-1.200 3.200"/></g></svg>
</div>

<!-- LOWER LEFT -->
<div id="lowleft" class="abs"></div>

<div class="abs" style="left:0;top:916px;width:36px;height:56px;background:#2b313d"></div>
<div class="abs" style="left:0;top:922px;width:20px;height:45px;background:#161b22"></div>
<div class="abs" style="left:25px;top:922px;width:9px;height:45px;background-image:linear-gradient(90deg,#4a8ad8 2px,transparent 2px),linear-gradient(#2b313d 1px,transparent 1px);background-size:3px 3px,3px 3px;background-color:transparent"></div>
<div class="abs" style="left:25px;top:922px;width:9px;height:45px;background-image:linear-gradient(#2b313d 1px,transparent 1px);background-size:3px 3px"></div>
<div class="abs" style="left:25px;top:922px;width:9px;height:6px;background-color:#2b313d;background-image:linear-gradient(90deg,#07090c 2px,transparent 2px);background-size:3px 3px"></div>
<div class="abs" style="left:25px;top:922px;width:9px;height:6px;background-image:linear-gradient(#2b313d 1px,transparent 1px);background-size:3px 3px"></div>
<div class="abs" style="left:0;top:1003px;width:36px;height:37px;background:#323845;border-top:1px solid #4a5262"></div>
<!-- gap strip texts -->
<div class="abs" style="left:272px;top:150px;font-size:11px;color:#777;width:8px;overflow:hidden;direction:rtl;white-space:nowrap">us</div>
<div class="abs" style="left:272px;top:186px;font-size:11px;color:#555;width:8px;overflow:hidden;direction:rtl;white-space:nowrap">s/</div>
<div class="abs" style="left:272px;top:170px;width:8px;height:1px;background:#cfcfcf"></div>
<div class="abs" style="left:272px;top:210px;width:8px;height:1px;background:#cfcfcf"></div>
<svg class="abs" style="left:272px;top:227px" width="8" height="12" viewBox="0 0 8 12"><path d="M7 1L2 6l5 5" stroke="#444" stroke-width="1.200" fill="none"/></svg>


<!-- TASKBAR -->
<div id="tb" class="abs"></div>
<div id="search" class="abs"></div>

<!-- start -->
<div class="abs" style="left:0;top:1040px;width:48px;height:40px;background:#363636"></div>
<svg class="abs" style="left:15px;top:1051px" width="18" height="18" viewBox="0 0 18 18"><path d="M0 2.600L7.400 1.600V8.500H0zM8.300 1.450L18 0V8.500H8.300zM0 9.400H7.400V16.400L0 15.400zM8.300 9.400H18V18L8.300 16.550z" fill="#fff"/></svg>
<!-- search -->
<svg class="abs" style="left:59px;top:1050px" width="19" height="20" viewBox="0 0 19 20"><circle cx="11.500" cy="7.500" r="5.800" fill="none" stroke="#222" stroke-width="1.500"/><path d="M7.500 11.800L1 18.500" stroke="#222" stroke-width="1.600"/></svg>
<div class="abs" style="left:89px;top:1050px;font-size:15.800px;line-height:20px;color:#3c3c3c;white-space:nowrap"><span class="cj" style="width:10em">在這裡輸入文字來搜尋</span></div>
<svg class="abs" style="left:256px;top:1040px" width="80" height="40" viewBox="256 1040 80 40">
<path d="M258 1080q8-9 30-9 26-1 48 9z" fill="#c9b46a"/><path d="M262 1080q10-7 28-7 22 0 40 7z" fill="#9a9a3c" opacity=".7"/>
<g stroke="#b5763a" stroke-linecap="round" fill="none"><path d="M274 1076L280 1042" stroke-width="3.400"/><path d="M284 1074L289 1042" stroke-width="2.800"/><path d="M299 1080L299.500 1042" stroke-width="5"/><path d="M311.500 1076L307 1042" stroke-width="3.200"/><path d="M323 1078L315 1042" stroke-width="3.800"/></g>
<g fill="#77882a"><ellipse cx="280" cy="1043" rx="4" ry="1.800"/><ellipse cx="276" cy="1052" rx="4.500" ry="2"/><ellipse cx="282" cy="1049" rx="3.500" ry="1.700"/><ellipse cx="273" cy="1060" rx="4" ry="2"/><ellipse cx="289" cy="1044" rx="3.500" ry="1.600"/><ellipse cx="291" cy="1053" rx="3.500" ry="1.700"/><ellipse cx="285" cy="1061" rx="3.500" ry="1.700"/><ellipse cx="299" cy="1043" rx="4.500" ry="1.900"/><ellipse cx="296" cy="1050" rx="5" ry="2"/><ellipse cx="303" cy="1055" rx="5" ry="2.100"/><ellipse cx="297" cy="1061" rx="6" ry="2.500"/><ellipse cx="299" cy="1070" rx="8" ry="3"/><ellipse cx="307" cy="1044" rx="3.500" ry="1.600"/><ellipse cx="308.500" cy="1051" rx="3.500" ry="1.600"/><ellipse cx="316" cy="1043" rx="4" ry="1.800"/><ellipse cx="318" cy="1050" rx="5" ry="2"/><ellipse cx="315" cy="1057" rx="4.500" ry="2"/><ellipse cx="321" cy="1062" rx="5.500" ry="2.300"/></g>
</svg>
<!-- mail -->
<svg class="abs" style="left:350px;top:1047px" width="26" height="25" viewBox="0 0 26 25"><path d="M1 10L13 1l12 9z" fill="#0f5fc0"/><rect x="1" y="10" width="24" height="14" fill="#1f8fe6"/><path d="M3.500 10h19L13 17z" fill="#f4faff"/><path d="M1 24l12-9 12 9z" fill="#1a7fd8"/><path d="M13 15l12 9V10z" fill="#2aa0f0" opacity=".6"/></svg>
<!-- calc -->
<svg class="abs" style="left:401px;top:1049px" width="22" height="22" viewBox="0 0 22 22"><rect x=".5" y=".5" width="20.500" height="20.500" fill="#a9cbe8" stroke="#7ea6c8"/><g stroke="#1d4c86" stroke-width="1.200"><path d="M3 4h14M3 7.500h11M3 11h9M3 14.500h7M3 18h6"/><path d="M16 3v16M12.500 15.500h6.500M12.500 18.500h6.500"/></g><g stroke="#dcecf8" stroke-width=".7"><path d="M6 2v18M10 2v18"/></g></svg>
<!-- store -->
<svg class="abs" style="left:448px;top:1047px" width="26" height="26" viewBox="0 0 26 26"><path d="M8 8V4.500q0-2 2-2h6q2 0 2 2V8" fill="none" stroke="#2f8ed8" stroke-width="1.800"/><path d="M1.500 7h23v14.500q0 3-3 3h-17q-3 0-3-3z" fill="#f4f4f4"/><rect x="8" y="11" width="4.600" height="4.600" fill="#e8632c"/><rect x="13.600" y="11" width="4.600" height="4.600" fill="#8cbf26"/><rect x="8" y="16.600" width="4.600" height="4.600" fill="#2a8fe0"/><rect x="13.600" y="16.600" width="4.600" height="4.600" fill="#f2b416"/></svg>
<!-- explorer -->
<svg class="abs" style="left:498px;top:1050px" width="24" height="19" viewBox="0 0 24 19"><path d="M1 2q0-1.500 1.500-1.500H8l2 2H22q1 0 1 1V17H1z" fill="#f0b824"/><path d="M1 5h22v12.500H1z" fill="#fbd25a"/><path d="M5 18v-5.500q0-1 1-1h12q1 0 1 1V18h-4v-3.500H9V18z" fill="#4d8fd0"/></svg>
<!-- PS active -->
<div class="abs" style="left:535px;top:1040px;width:44px;height:40px;background:#606060"></div>
<div class="abs" style="left:579px;top:1040px;width:4px;height:40px;background:#505050"></div>
<div class="abs" style="left:548px;top:1049px;width:21px;height:19px;background:#0b1566;border:1.500px solid #a5bcf2;color:#b9ccff;font-size:14px;line-height:16px;text-align:center;letter-spacing:-.2px">Ps</div>
<!-- chrome -->
<svg class="abs" style="left:595px;top:1047px" width="26" height="26" viewBox="-13 -13 26 26"><circle r="12" fill="#fbc116"/><path d="M0 0L-10.400-6A12 12 0 0 1 10.400-6z" fill="#e33b2e"/><path d="M0 0L-10.400-6A12 12 0 0 0 0 12L5.200 3z" fill="#229342"/><path d="M-10.400-6A12 12 0 0 1 10.400-6H0z" fill="#e33b2e"/><circle r="5.600" fill="#fff"/><circle r="4.400" fill="#1a73e8"/></svg>
<!-- pen -->
<svg class="abs" style="left:644px;top:1050px" width="25" height="18" viewBox="0 0 25 18"><path d="M1 8L16 1l8 5.500L9 15z" fill="#3c3c3c"/><path d="M1 8l8 7 15-8.500v1.500L9 17 1 9.500z" fill="#1e1e1e"/><path d="M4 8l11-5" stroke="#6a6a6a" stroke-width="1"/></svg>
<!-- edge -->
<svg class="abs" style="left:693px;top:1047px" width="26" height="26" viewBox="-13 -13 26 26"><defs><linearGradient id="eg" x1="0" y1="0" x2="1" y2="1"><stop offset="0" stop-color="#35c1f1"/><stop offset=".5" stop-color="#2a9fd8"/><stop offset="1" stop-color="#5fd06a"/></linearGradient></defs><circle r="12" fill="#1469c0"/><path d="M-12 0A12 12 0 0 1 12-1q0 6-6 6-4 0-3-3 1-3-3-4-6 0-6 7 0 4 3 6A12 12 0 0 1-12 0z" fill="url(#eg)"/><path d="M-6 5q0 6 7 7-8 1-11-6 0-5 4-1z" fill="#0d5aa8"/></svg>
<!-- wechat -->
<svg class="abs" style="left:741px;top:1046px" width="30" height="28" viewBox="741 1046 30 28"><ellipse cx="752" cy="1056" rx="9.500" ry="8.200" fill="#2dc25a"/><path d="M746 1062l-1.500 4 5-2.500z" fill="#2dc25a"/><circle cx="748.500" cy="1054" r="1.100" fill="#1a7a38"/><circle cx="755" cy="1054" r="1.100" fill="#1a7a38"/><ellipse cx="760.500" cy="1063" rx="7.500" ry="6.500" fill="#efefef"/><path d="M764 1068l2.500 3-5.500-2z" fill="#efefef"/><circle cx="758" cy="1061.500" r=".9" fill="#bdbdbd"/><circle cx="763" cy="1061.500" r=".9" fill="#bdbdbd"/></svg>
<!-- w white -->
<svg class="abs" style="left:791px;top:1047px" width="26" height="26" viewBox="-13 -13 26 26"><circle r="12" fill="#fff"/><path d="M-6-3.500v5q0 2.500 3 2.500t3-2.500v-5M0-3.500v5q0 2.500 3 2.500t3-2.500v-5" fill="none" stroke="#3a9fd6" stroke-width="1.500"/></svg>
<!-- w dark -->
<svg class="abs" style="left:840px;top:1047px" width="26" height="26" viewBox="0 0 26 26"><rect x="1" y="1" width="24" height="24" rx="5" fill="#0f151c"/><path d="M5 9q2 10 5 8t2-7q2 10 6 7 3-3 3-8" fill="none" stroke="#1f7fe0" stroke-width="3.200" stroke-linecap="round"/><path d="M16 9q4-3 6 3" fill="none" stroke="#35b56a" stroke-width="2.600" stroke-linecap="round"/></svg>
<!-- LINE -->
<div class="abs" style="left:878px;top:1040px;width:48px;height:40px;background:#c57a2b"></div>
<svg class="abs" style="left:890px;top:1047px" width="24" height="25" viewBox="0 0 24 25"><rect width="24" height="24.500" rx="3" fill="#12a012"/><ellipse cx="12" cy="11.500" rx="9.200" ry="7.600" fill="#f2fff0"/><path d="M9 18l3 4 3-4z" fill="#f2fff0"/><text x="12" y="14" font-family="Liberation Sans, sans-serif" font-weight="bold" font-size="6.500" fill="#12a012" text-anchor="middle">LINE</text></svg>
<!-- telegram -->
<svg class="abs" style="left:938px;top:1046px" width="28" height="28" viewBox="938 1046 28 28"><circle cx="950.500" cy="1059" r="11.500" fill="#2d98d4"/><path d="M943 1059l14-6-2.500 13-4-3-2 2-.5-3.500 6-6-8 5z" fill="#fff"/><rect x="948.500" y="1064" width="16" height="9" rx="1.500" fill="#e2483c"/><text x="956.500" y="1071.800" font-family="Liberation Sans, sans-serif" font-weight="bold" font-size="8.500" fill="#fff" text-anchor="middle">..76</text></svg>
<!-- (C) -->
<div class="abs" style="left:976px;top:1040px;width:48px;height:40px;background:#d87a20"></div>
<svg class="abs" style="left:987px;top:1047px" width="26" height="26" viewBox="-13 -13 26 26"><circle r="11.800" fill="#fff"/><path d="M6.500-5.500A8.500 8.500 0 1 0 7.500 4" fill="none" stroke="#1a2e9a" stroke-width="2.600"/><path d="M7 5q-4 4-9 2" fill="none" stroke="#1a2e9a" stroke-width="1"/><circle cx="-1" cy="-1" r=".9" fill="#1a2e9a"/><circle cx="4" cy="-2" r=".9" fill="#1a2e9a"/></svg>
<!-- photos -->
<svg class="abs" style="left:1038px;top:1049px" width="23" height="22" viewBox="0 0 23 22"><defs><linearGradient id="pg" x1="0" y1="0" x2="1" y2="1"><stop offset="0" stop-color="#2a8ae0"/><stop offset="1" stop-color="#2f6fd0"/></linearGradient></defs><rect width="22.500" height="21.500" rx="1" fill="url(#pg)"/><circle cx="15.500" cy="5" r="2" fill="#d8f0ff"/><path d="M10 12l6-4 6.500 6v7.500H10z" fill="#3a78d8"/><path d="M0 16L7.500 7.500l9 9.500 3 4.500H0z" fill="#0f3f8a"/><path d="M0 21.500h22.500V18l-4-3-6 6.500z" fill="#1a50a8" opacity=".8"/></svg>
<!-- discord -->
<svg class="abs" style="left:1085px;top:1047px" width="26" height="26" viewBox="-13 -13 26 26"><circle r="12" fill="#5865f2"/><path d="M-6.500-4q3-1.800 6.500-1.800T6.500-4q2.500 4 2.500 9-2.500 2-4.500 2l-1-1.800q-3.500 1-7 0l-1 1.800q-2 0-4.500-2 0-5 2.500-9z" fill="#fff"/><ellipse cx="-3" cy="1" rx="1.600" ry="1.900" fill="#5865f2"/><ellipse cx="3" cy="1" rx="1.600" ry="1.900" fill="#5865f2"/></svg>
<!-- ruby -->
<svg class="abs" style="left:1134px;top:1047px" width="26" height="26" viewBox="1134 1047 26 26"><path d="M1139 1056l3.500-3.500h9l3.500 3.500-8 12z" fill="#e2474a"/><path d="M1139 1056h16M1142.500 1052.500l2 3.500 2.500 12 2.500-12 2-3.500M1144.500 1056l2.500-3.500 2.500 3.500" stroke="#fbd0d0" stroke-width=".8" fill="none"/><g fill="#f4f4f4"><circle cx="1147" cy="1049" r="1.100"/><circle cx="1141.500" cy="1050.500" r="1"/><circle cx="1152.500" cy="1050.500" r="1"/><circle cx="1137.500" cy="1053.500" r=".9"/><circle cx="1156.500" cy="1053.500" r=".9"/></g><ellipse cx="1147" cy="1070" rx="5" ry="1" fill="#222"/></svg>
<!-- green ball -->
<div class="abs" style="left:1172px;top:1040px;width:48px;height:40px;background:#a8733f"></div>
<div class="abs" style="left:1184px;top:1048px;width:24px;height:24px;border-radius:12px;background:radial-gradient(circle at 45% 40%,#166a5c,#0f5248 70%,#0c463e)"></div>
<!-- record -->
<svg class="abs" style="left:1233px;top:1048px" width="24" height="24" viewBox="-12 -12 24 24"><circle r="11.200" fill="#fff"/><circle r="9.800" fill="#0a0606"/><circle r="6" fill="#f0392d"/></svg>
<div class="abs" style="left:490px;top:1078px;width:31px;height:2px;background:#8fb9e3"></div><div class="abs" style="left:522px;top:1078px;width:8px;height:2px;background:#7fa6cc"></div><div class="abs" style="left:535px;top:1078px;width:48px;height:2px;background:#8fb9e3"></div><div class="abs" style="left:588px;top:1078px;width:32px;height:2px;background:#8fb9e3"></div><div class="abs" style="left:621px;top:1078px;width:7px;height:2px;background:#7fa6cc"></div><div class="abs" style="left:686px;top:1078px;width:39px;height:2px;background:#8fb9e3"></div><div class="abs" style="left:735px;top:1078px;width:40px;height:2px;background:#8fb9e3"></div><div class="abs" style="left:795px;top:1078px;width:28px;height:2px;background:#8fb9e3"></div><div class="abs" style="left:833px;top:1078px;width:39px;height:2px;background:#8fb9e3"></div><div class="abs" style="left:878px;top:1078px;width:48px;height:2px;background:#ff8c14"></div><div class="abs" style="left:931px;top:1078px;width:39px;height:2px;background:#8fb9e3"></div><div class="abs" style="left:976px;top:1078px;width:48px;height:2px;background:#ff8c14"></div><div class="abs" style="left:1029px;top:1078px;width:40px;height:2px;background:#8fb9e3"></div><div class="abs" style="left:1077.5px;top:1078px;width:40px;height:2px;background:#8fb9e3"></div><div class="abs" style="left:1126px;top:1078px;width:40px;height:2px;background:#8fb9e3"></div><div class="abs" style="left:1172px;top:1078px;width:48px;height:2px;background:#f08c1e"></div><div class="abs" style="left:1225px;top:1078px;width:40px;height:2px;background:#8fb9e3"></div>
<!-- weather -->
<svg class="abs" style="left:1447px;top:1046px" width="28" height="28" viewBox="1447 1046 28 28"><circle cx="1461" cy="1059.500" r="9.500" fill="#f2a93b"/><circle cx="1457.500" cy="1056.500" r="7.300" fill="#3a3e48"/><g fill="#bcd3ea"><ellipse cx="1454.500" cy="1053.500" rx="5.800" ry="3"/><circle cx="1456" cy="1051" r="3.200"/><circle cx="1452.500" cy="1052.300" r="2.300"/></g><g fill="#c9d8ea"><ellipse cx="1466.500" cy="1067.500" rx="6.500" ry="3"/><circle cx="1468" cy="1065" r="3.200"/><circle cx="1464" cy="1066.200" r="2.400"/></g></svg>
<div class="tray" style="left:1481px;top:1051px;font-size:14.500px;line-height:18px">23°C</div>
<div class="tray" style="left:1521px;top:1051px;font-size:13.800px;line-height:18px"><span class="cj" style="width:4em">晴時多雲</span></div>
<svg class="abs" style="left:1601px;top:1055px" width="14" height="9" viewBox="0 0 14 9"><path d="M1 8l6-6.500L13 8" fill="none" stroke="#fff" stroke-width="1.300"/></svg>
<!-- qq -->
<svg class="abs" style="left:1624px;top:1050px" width="18" height="19" viewBox="0 0 18 19"><ellipse cx="8" cy="7" rx="5" ry="6" fill="#111"/><ellipse cx="8" cy="12.500" rx="6.500" ry="5" fill="#111"/><ellipse cx="8" cy="13.500" rx="3.600" ry="3.600" fill="#fff"/><ellipse cx="6.300" cy="5.500" rx="1.200" ry="1.700" fill="#fff"/><ellipse cx="9.700" cy="5.500" rx="1.200" ry="1.700" fill="#fff"/><ellipse cx="8" cy="8.600" rx="2.800" ry="1" fill="#f2a51a"/><path d="M3 10.500q5 2.500 10 0v2q-5 2.500-10 0z" fill="#e2372a"/><ellipse cx="4.500" cy="17.600" rx="3" ry="1.200" fill="#f2a51a"/><ellipse cx="11.500" cy="17.600" rx="3" ry="1.200" fill="#f2a51a"/><rect x="9.500" y="9" width="8" height="7" rx="1" fill="#f4a81c"/><path d="M11 11.500h5M11 13.500h5" stroke="#fff" stroke-width=".9"/></svg>
<!-- cam -->
<svg class="abs" style="left:1649px;top:1050px" width="15" height="20" viewBox="0 0 15 20"><g fill="none" stroke="#fff" stroke-width="1.200"><rect x="2" y="5.500" width="7.800" height="8.500" rx="2"/><path d="M9.800 8.800l3-1.600v5.600l-3-1.600"/><path d="M3.200 3q2.700-1.600 5.400 0M3.200 16.800q2.700 1.600 5.400 0"/></g></svg>
<!-- monitor -->
<svg class="abs" style="left:1671px;top:1050px" width="20" height="20" viewBox="0 0 20 20"><g fill="none" stroke="#fff" stroke-width="1.200"><path d="M2 4.500L17 2v13L2 15.500z"/><path d="M6 12q0-4 4-4.500M8 6l2.500 1.500L9 10"/></g><circle cx="13.500" cy="14.500" r="3.200" fill="#2f7fe0"/></svg>
<!-- speaker -->
<svg class="abs" style="left:1695px;top:1051px" width="18" height="18" viewBox="0 0 18 18"><g fill="none" stroke="#fff" stroke-width="1.200" stroke-linejoin="round"><path d="M1 6.500h3L8 3v12l-4-3.500H1z"/><path d="M10.500 6.500q1.500 2.500 0 5M12.800 4.500q2.800 4.500 0 9M15 2.500q4 6.500 0 13" stroke-linecap="round"/></g></svg>
<!-- battery -->
<svg class="abs" style="left:1719px;top:1052px" width="18" height="15" viewBox="0 0 18 15"><g fill="none" stroke="#fff" stroke-width="1.200"><path d="M2.500 1v3M5.500 1v3M1 4h6v2.500q0 2-3 2t-3-2zM4 8.500V13h2"/><rect x="6.500" y="4.500" width="9.500" height="8" fill="#fff"/><path d="M16.500 7v3.500"/></g></svg>
<!-- keyboard -->
<svg class="abs" style="left:1743px;top:1052px" width="25" height="15" viewBox="0 0 25 15"><rect x=".7" y=".7" width="23.600" height="13.600" rx="1" fill="none" stroke="#fff" stroke-width="1.200"/><g stroke="#fff" stroke-width="1.200" stroke-dasharray="1.400 1.300"><path d="M3.500 4.200h18M3.500 7.200h18"/></g><path d="M6 10.600h13" stroke="#fff" stroke-width="1.200"/><path d="M3.500 10.600h1.400M20.100 10.600h1.400" stroke="#fff" stroke-width="1.200"/></svg>
<div class="tray" style="left:1776px;top:1051px;font-size:15px;line-height:18px"><span class="cj" style="width:1em">英</span></div>
<div class="tray" style="left:1802px;top:1042px;font-size:12.200px;line-height:16px"><span class="cj" style="width:2em">下午</span> 08:51</div>
<div class="tray" style="left:1802px;top:1060px;font-size:13px;line-height:16px">2023/4/28</div>
<!-- notif -->
<svg class="abs" style="left:1876px;top:1050px" width="30" height="28" viewBox="1876 1050 30 28"><path d="M1879 1052h16.500v13h-9l-3.500 3.500v-3.500h-4z" fill="#fff"/><path d="M1881.500 1055.500h11.500M1881.500 1058.500h11.500M1881.500 1061.500h8" stroke="#424242" stroke-width="1.100"/><circle cx="1894.500" cy="1067" r="7.800" fill="#424242" stroke="#8a8a8a" stroke-width="1"/><text x="1894.500" y="1071.300" font-family="Liberation Sans, sans-serif" font-size="11.500" fill="#fff" text-anchor="middle">4</text></svg>
<div class="abs" style="left:1915px;top:1040px;width:1px;height:40px;background:#7a7a7a"></div>


</div>
</body>
</html>
